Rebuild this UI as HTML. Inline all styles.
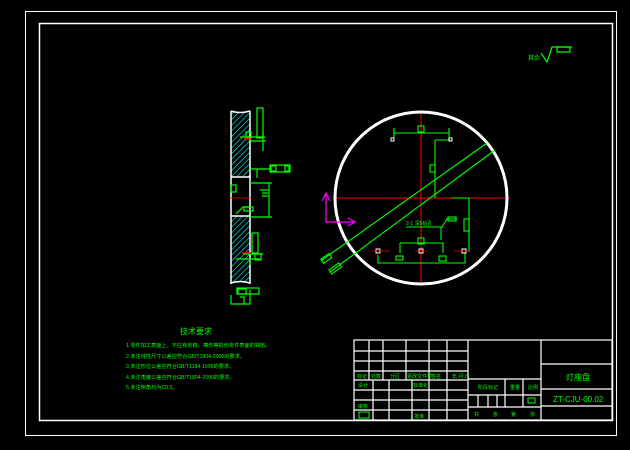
<!DOCTYPE html>
<html><head><meta charset="utf-8"><style>
html,body{margin:0;padding:0;background:#000;width:630px;height:450px;overflow:hidden}
svg{display:block}
text{font-family:"Liberation Sans","Noto Sans CJK SC",sans-serif;fill:#0f0}
</style></head><body>
<svg width="630" height="450" viewBox="0 0 630 450" xmlns="http://www.w3.org/2000/svg">
<defs>
<pattern id="h" width="4" height="4" patternUnits="userSpaceOnUse" patternTransform="rotate(45)">
<line x1="0" y1="0" x2="0" y2="4" stroke="#0ff" stroke-width="1.2"/>
</pattern>
</defs>
<rect x="25.5" y="11.5" width="591" height="424" fill="none" stroke="#fff" stroke-width="1"/>
<rect x="39.5" y="23.5" width="573" height="397" fill="none" stroke="#fff" stroke-width="1.5"/>

<text x="528" y="60" font-size="6">其余</text>
<path d="M541 53 L547 62 L552 47 L572 47" fill="none" stroke="#0f0" stroke-width="1.2"/>
<rect x="557" y="47" width="13" height="5" fill="none" stroke="#0f0" stroke-width="1.2"/>

<rect x="231" y="112" width="19" height="65" fill="url(#h)"/>
<rect x="231" y="216" width="19" height="67" fill="url(#h)"/>
<g stroke="#fff" stroke-width="1.5" fill="none">
<path d="M231 111 L231 284 M250 111 L250 284 M231 177 L250 177 M231 216 L250 216 M231 111 Q240 114 250 111 M231 283 Q240 280 250 283"/>
</g>
<g stroke="#0f0" stroke-width="1.2" fill="none">
<rect x="257" y="108" width="6" height="30"/>
<path d="M240 137 L265 137 M250 141 L266 141 M263 133 L263 151"/>
<rect x="246" y="132" width="5" height="5"/>
<rect x="270" y="165" width="20" height="7"/><rect x="271" y="166" width="5" height="5"/><rect x="285" y="166" width="4" height="5"/>
<path d="M250 169 L270 169 M257 169 L257 178 M250 183 L272 183 M269 183 L269 217 M250 217 L272 217 M260 190 L268 190 M262 193 L268 193 M262 196 L268 196"/>
<rect x="231" y="185" width="5" height="7"/>
<path d="M236 214 L243 207 L250 207"/><rect x="244" y="207" width="9" height="4"/>
<rect x="252" y="233" width="6" height="20"/>
<path d="M243 254 L263 254 M236 259 L260 259 M250 259 L250 265"/>
<rect x="255" y="254" width="6" height="6"/>
<rect x="237" y="288" width="22" height="6"/><rect x="238" y="289" width="8" height="5"/>
<path d="M231 295 L231 304 L250 304 L250 290 M240 297 L244 297 L244 304"/>
</g>
<path d="M244 139 L252 139 M242 253 L252 253" stroke="#f00" stroke-width="1.5"/>
<path d="M230 198 L251 198" stroke="#f00" stroke-width="0.8"/>

<path d="M334 198 L510 198 M421 110 L421 286" stroke="#f00" stroke-width="1"/>
<circle cx="421" cy="198" r="86" fill="none" stroke="#fff" stroke-width="3"/>
<g stroke="#0f0" stroke-width="1.1" fill="none">
<path d="M394 133 L449 133 M394 128 L394 138 M449 128 L449 138"/>
<rect x="418" y="126" width="6" height="6"/>
<path d="M435 140 L450 140 M435 140 L435 198"/>
<rect x="430" y="165" width="5" height="7"/>
<path d="M451 198 L469 198 L469 252"/>
<rect x="464" y="219" width="5" height="12"/>
<path d="M400 243 L443 243 L443 253 M400 243 L400 253"/>
<rect x="418" y="238" width="6" height="6"/>
<path d="M378 255 L378 263 L465 263 L465 253"/>
<rect x="396" y="256" width="7" height="4"/><rect x="439" y="256" width="7" height="5"/>
<path d="M406 227 L442 227 L447 219 L457 219"/><rect x="448" y="217" width="8" height="4"/>
<path d="M441 227 L441 240"/>
<path d="M322 260 L487 143 M330 272 L495 150"/>
<rect x="321" y="256" width="10" height="5" transform="rotate(-35 326 258)"/>
<rect x="329" y="266" width="12" height="5" transform="rotate(-35 335 268)"/>
</g>
<text x="406" y="225" font-size="5">2-1 深5钻孔</text>
<g fill="none" stroke="#fff" stroke-width="1">
<rect x="391" y="138" width="3" height="3"/><rect x="449" y="138" width="3" height="3"/>
<rect x="376" y="249" width="4" height="4"/><rect x="419" y="249" width="4" height="4"/><rect x="462" y="249" width="4" height="4"/>
</g>
<path d="M372 251 L390 251 M415 251 L427 251 M454 251 L470 251" stroke="#f00" stroke-width="0.8"/>
<path d="M326 193 L326 222 L354 222 M322 201 L326 193 L330 201 M348 218 L355 222 L348 226" fill="none" stroke="#f0f" stroke-width="1.2"/>

<text x="180" y="334" font-size="8">技术要求</text>
<g font-size="5.2">
<text x="126" y="347">1.零件加工表面上，不应有划痕、擦伤等损伤零件表面的缺陷。</text>
<text x="126" y="358">2.未注线性尺寸公差应符合GB/T1804-2000的要求。</text>
<text x="126" y="368">3.未注形位公差应符合GB/T1184-1996的要求。</text>
<text x="126" y="379">4.未注角度公差应符合GB/T1804-2000的要求。</text>
<text x="126" y="389">5.未注倒角均为C0.5。</text>
</g>

<g stroke="#fff" stroke-width="1.2" fill="none">
<rect x="354" y="340" width="258" height="80"/>
<path d="M354 351 H468 M354 361 H468 M354 371 H468 M354 380 H468 M354 390 H468 M354 400 H468 M354 410 H468"/>
<path d="M369 340 V380 M383 340 V380 M406 340 V380 M429 340 V380 M447 340 V380"/>
<path d="M373 380 V420 M389 380 V420 M412 380 V420 M429 380 V420 M447 380 V420"/>
<path d="M468 340 V420 M541 340 V420"/>
<path d="M468 379 H541 M468 395 H541 M468 407 H541 M505 379 V407 M523 379 V407 M478 395 V407 M488 395 V407 M497 395 V407"/>
<path d="M541 364 H612 M541 389 H612 M541 406 H612"/>
</g>
<g font-size="5">
<text x="357" y="378">标记</text><text x="371" y="378">处数</text><text x="390" y="378">分区</text><text x="407" y="378">更改文件号</text><text x="431" y="378">签名</text><text x="452" y="378">年.月.日</text>
<text x="358" y="387">设计</text><text x="413" y="387">标准化</text>
<text x="358" y="408">审核</text><text x="414" y="418">批准</text>
<text x="478" y="389">阶段标记</text><text x="510" y="389">重量</text><text x="528" y="389">比例</text>
<text x="474" y="416">共</text><text x="493" y="416">张</text><text x="511" y="416">第</text><text x="530" y="416">张</text>
</g>
<rect x="359" y="412" width="10" height="6" fill="none" stroke="#0f0"/>
<rect x="528" y="398" width="7" height="5" fill="none" stroke="#0f0"/>
<text x="566" y="380" font-size="8">灯座盘</text>
<text x="553" y="402" font-size="8" font-family="Liberation Mono,monospace">ZT-CJU-00.02</text>
</svg>
</body></html>
